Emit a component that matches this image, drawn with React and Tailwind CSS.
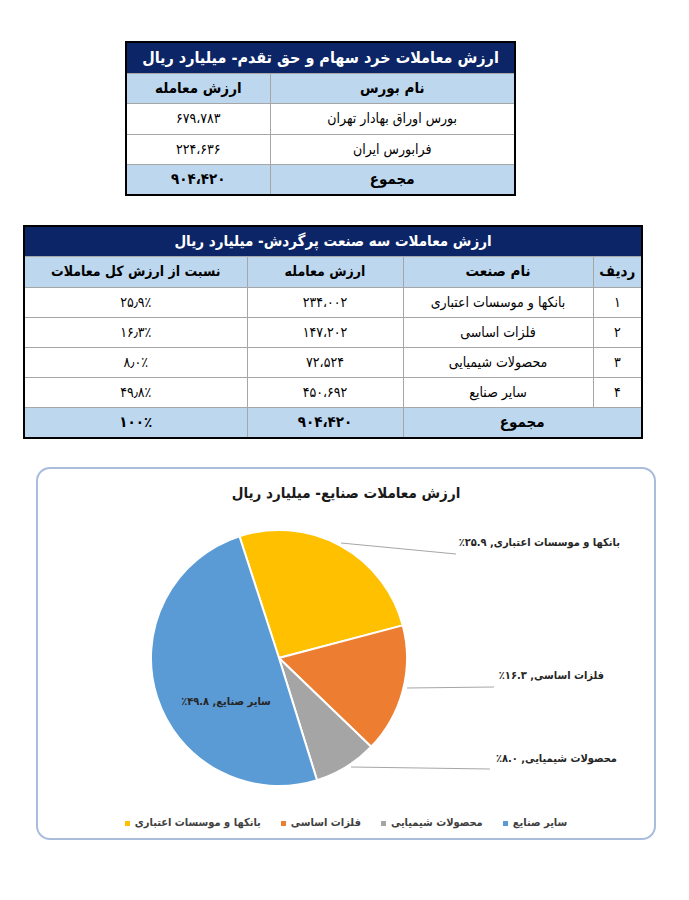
import React from "react";

const NAVY = "bg-[#0b2566]";

const industries = [
  { id: "۱", name: "بانکها و موسسات اعتباری", value: "۲۳۴،۰۰۲", share: "۲۵٫۹٪" },
  { id: "۲", name: "فلزات اساسی", value: "۱۴۷،۲۰۲", share: "۱۶٫۳٪" },
  { id: "۳", name: "محصولات شیمیایی", value: "۷۲،۵۲۴", share: "۸٫۰٪" },
  { id: "۴", name: "سایر صنایع", value: "۴۵۰،۶۹۲", share: "۴۹٫۸٪" },
];

// pie slices, clockwise from the top
const slices = [
  { pct: 25.9, color: "#ffc000" },
  { pct: 16.3, color: "#ed7d31" },
  { pct: 8.0, color: "#a5a5a5" },
  { pct: 49.8, color: "#5b9bd5" },
];

const CX = 241;
const CY = 153;
const R = 128;

function pt(deg) {
  const a = (deg * Math.PI) / 180;
  return [CX + R * Math.sin(a), CY - R * Math.cos(a)];
}

function slicePaths() {
  let start = -18;
  return slices.map((s) => {
    const sweep = (s.pct / 100) * 360;
    const [x0, y0] = pt(start);
    const [x1, y1] = pt(start + sweep);
    const large = sweep > 180 ? 1 : 0;
    start += sweep;
    return {
      color: s.color,
      d: `M${CX} ${CY} L${x0.toFixed(2)} ${y0.toFixed(2)} A${R} ${R} 0 ${large} 1 ${x1.toFixed(2)} ${y1.toFixed(2)} Z`,
    };
  });
}

const cell = "border border-[#a6a6a6] text-center align-middle";

function StockTable() {
  return (
    <div className="ml-[125px] mt-[41px] w-[391px] border-2 border-black">
      <table dir="rtl" className="w-full table-fixed border-collapse border-hidden">
        <colgroup>
          <col className="w-[244px]" />
          <col className="w-[143px]" />
        </colgroup>
        <tbody>
          <tr className="h-[30px]">
            <td colSpan={2} className={`${NAVY} text-center text-[16px] font-bold text-white`}>
              ارزش معاملات خرد سهام و حق تقدم- میلیارد ریال
            </td>
          </tr>
          <tr className="h-[30px] bg-[#bdd7ee] text-[15px] font-bold">
            <td className={cell}>نام بورس</td>
            <td className={cell}>ارزش معامله</td>
          </tr>
          <tr className="h-[31px] text-[14px]">
            <td className={cell}>بورس اوراق بهادار تهران</td>
            <td className={cell}>۶۷۹،۷۸۳</td>
          </tr>
          <tr className="h-[30px] text-[14px]">
            <td className={cell}>فرابورس ایران</td>
            <td className={cell}>۲۲۴،۶۳۶</td>
          </tr>
          <tr className="h-[30px] bg-[#bdd7ee] text-[15px] font-bold">
            <td className={cell}>مجموع</td>
            <td className={cell}>۹۰۴،۴۲۰</td>
          </tr>
        </tbody>
      </table>
    </div>
  );
}

function IndustryTable() {
  return (
    <div className="ml-[23px] mt-[29px] w-[620px] border-2 border-black">
      <table dir="rtl" className="w-full table-fixed border-collapse border-hidden">
        <colgroup>
          <col className="w-[48px]" />
          <col className="w-[190px]" />
          <col className="w-[156px]" />
          <col className="w-[222px]" />
        </colgroup>
        <tbody>
          <tr className="h-[29px]">
            <td colSpan={4} className={`${NAVY} text-center text-[15px] font-bold text-white`}>
              ارزش معاملات سه صنعت پرگردش- میلیارد ریال
            </td>
          </tr>
          <tr className="h-[31px] bg-[#bdd7ee] text-[14px] font-bold">
            <td className={`${cell} text-[15px]`}>ردیف</td>
            <td className={`${cell} text-[15px]`}>نام صنعت</td>
            <td className={cell}>ارزش معامله</td>
            <td className={cell}>نسبت از ارزش کل معاملات</td>
          </tr>
          {industries.map((row) => (
            <tr key={row.id} className="h-[30px] text-[14px]">
              <td className={cell}>{row.id}</td>
              <td className={cell}>{row.name}</td>
              <td className={cell}>{row.value}</td>
              <td className={cell}>{row.share}</td>
            </tr>
          ))}
          <tr className="h-[30px] bg-[#bdd7ee] text-[15px] font-bold">
            <td colSpan={2} className={cell}>مجموع</td>
            <td className={cell}>۹۰۴،۴۲۰</td>
            <td className={cell}>۱۰۰٪</td>
          </tr>
        </tbody>
      </table>
    </div>
  );
}

function LegendItem({ color, label }) {
  return (
    <div className="flex items-center gap-[5px]">
      <span>{label}</span>
      <span className={`h-[5px] w-[5px] ${color}`} />
    </div>
  );
}

function PieChart() {
  const paths = slicePaths();
  return (
    <div
      dir="rtl"
      className="ml-[36px] mt-[28px] h-[373px] w-[620px] rounded-[14px] border-2 border-[#a9bcdc] pt-[12px]"
    >
      <div className="h-[24px] text-center text-[15px] font-bold leading-[24px] text-[#1a1a1a]">
        ارزش معاملات صنایع- میلیارد ریال
      </div>

      <div className="relative h-[300px] w-full">
        <svg width="616" height="300" viewBox="0 0 616 300" className="block">
          {paths.map((p) => (
            <path key={p.color} d={p.d} fill={p.color} stroke="#ffffff" strokeWidth="2" strokeLinejoin="round" />
          ))}
          <g stroke="#a6a6a6" strokeWidth="1">
            <line x1="303" y1="38" x2="418" y2="49" />
            <line x1="369" y1="183" x2="456" y2="182" />
            <line x1="313" y1="262" x2="452" y2="264" />
          </g>
        </svg>

        <div className="absolute right-[34px] top-[29px] text-[11px] font-bold leading-[18px] text-[#262626]">
          بانکها و موسسات اعتباری, ۲۵.۹٪
        </div>
        <div className="absolute right-[50px] top-[162px] text-[11px] font-bold leading-[18px] text-[#262626]">
          فلزات اساسی, ۱۶.۳٪
        </div>
        <div className="absolute right-[37px] top-[245px] text-[11px] font-bold leading-[18px] text-[#262626]">
          محصولات شیمیایی, ۸.۰٪
        </div>
        <div className="absolute left-[188px] top-[188px] -translate-x-1/2 whitespace-nowrap text-[11px] font-bold leading-[18px] text-[#262626]">
          سایر صنایع, ۴۹.۸٪
        </div>
      </div>

      <div className="mt-[6px] flex h-[24px] items-center justify-center gap-[20px] text-[11px] font-bold text-[#404040]">
        <LegendItem color="bg-[#5b9bd5]" label="سایر صنایع" />
        <LegendItem color="bg-[#a5a5a5]" label="محصولات شیمیایی" />
        <LegendItem color="bg-[#ed7d31]" label="فلزات اساسی" />
        <LegendItem color="bg-[#ffc000]" label="بانکها و موسسات اعتباری" />
      </div>
    </div>
  );
}

export default function App() {
  return (
    <div className="min-h-[900px] w-[689px] overflow-hidden bg-white pb-[60px] font-['DejaVu_Sans_Condensed','DejaVu_Sans',sans-serif] text-black">
      <StockTable />
      <IndustryTable />
      <PieChart />
    </div>
  );
}
